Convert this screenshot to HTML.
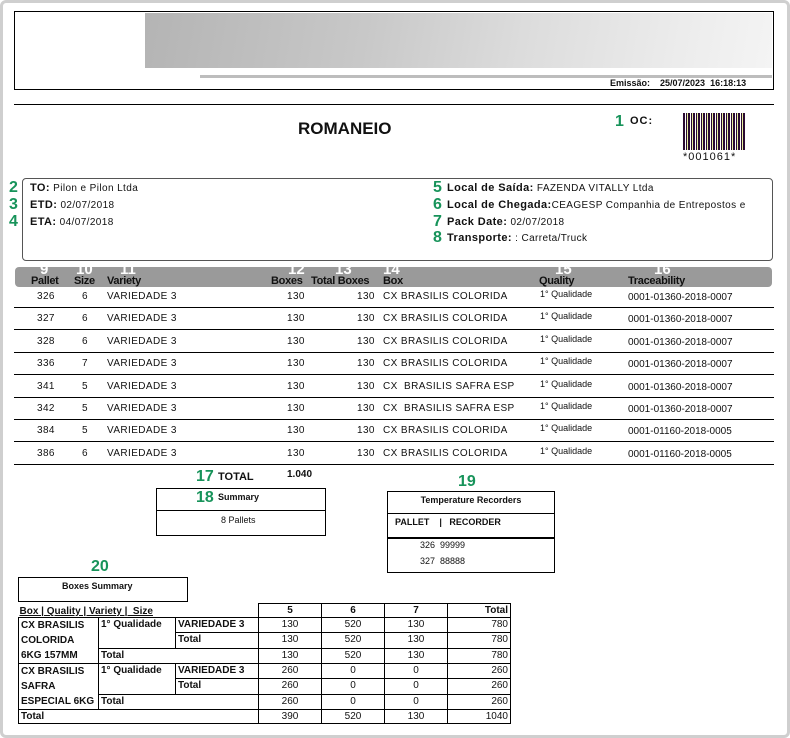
<!DOCTYPE html>
<html><head><meta charset="utf-8"><style>
*{margin:0;padding:0;box-sizing:border-box}
body{width:790px;height:738px;background:#fff;font-family:"Liberation Sans",Arial,sans-serif;color:#111;position:relative;overflow:hidden}
.frame{position:absolute;left:0;top:0;width:790px;height:738px;border:3px solid #cfcfcf;border-radius:6px}
.a{position:absolute;white-space:nowrap}
.g{color:#17935a;font-weight:bold;font-size:16px}
.s{font-size:10px;letter-spacing:.4px}
.b{font-weight:bold}
.hd{font-size:11px;font-weight:bold;color:#111;letter-spacing:-.3px}
.hn{font-size:15px;font-weight:bold;color:#fff}
table.bs{position:absolute;left:18px;top:603px;border-collapse:collapse;font-size:10px;font-weight:bold}
table.bs td{border:1px solid #000;height:14px;padding:0 2px;line-height:13px;vertical-align:top}
</style></head><body>
<div class="frame"></div>
<div class="a" style="left:14px;top:11px;width:760px;height:79px;border:1px solid #000"></div>
<div class="a" style="left:145px;top:13px;width:627px;height:55px;background:linear-gradient(100deg,#b4b4b4 0%,#c8c8c8 35%,#dcdcdc 60%,#ececec 85%,#f4f4f4 100%)"></div>
<div class="a" style="left:200px;top:75px;width:572px;height:3px;background:#bdbdbd"></div>
<div class="a" style="left:610px;top:78px;font-size:9px;font-weight:bold">Emissão:&nbsp;&nbsp;&nbsp; 25/07/2023&nbsp; 16:18:13</div>
<div class="a" style="left:14px;top:104px;width:760px;height:1px;background:#000"></div>
<div class="a" style="left:298px;top:119px;font-size:17px;font-weight:bold">ROMANEIO</div>
<div class="a g" style="left:615px;top:113px">1</div>
<div class="a" style="left:630px;top:115px;font-size:11px;font-weight:bold;letter-spacing:1px">OC:</div>
<div class="a" style="left:683px;top:113px;width:62px;height:37px;background:repeating-linear-gradient(90deg,#2a0a30 0 2px,#fff 2px 3px,#2a0a30 3px 4px,#e8f0a0 4px 5px)"></div>
<div class="a" style="left:683px;top:151px;font-size:11px;letter-spacing:1px">*001061*</div>

<div class="a" style="left:22px;top:178px;width:751px;height:83px;border:1px solid #555;border-radius:4px"></div>
<div class="a g" style="left:9px;top:179px">2</div><div class="a s" style="left:30px;top:182px"><b style="font-size:11px">TO:</b> Pilon e Pilon Ltda</div>
<div class="a g" style="left:9px;top:196px">3</div><div class="a s" style="left:30px;top:199px"><b style="font-size:11px">ETD:</b> 02/07/2018</div>
<div class="a g" style="left:9px;top:213px">4</div><div class="a s" style="left:30px;top:216px"><b style="font-size:11px">ETA:</b> 04/07/2018</div>
<div class="a g" style="left:433px;top:179px">5</div><div class="a s" style="left:447px;top:182px"><b style="font-size:11px">Local de Saída:</b> FAZENDA VITALLY Ltda</div>
<div class="a g" style="left:433px;top:196px">6</div><div class="a s" style="left:447px;top:199px"><b style="font-size:11px">Local de Chegada:</b>CEAGESP Companhia de Entrepostos e</div>
<div class="a g" style="left:433px;top:213px">7</div><div class="a s" style="left:447px;top:216px"><b style="font-size:11px">Pack Date:</b> 02/07/2018</div>
<div class="a g" style="left:433px;top:229px">8</div><div class="a s" style="left:447px;top:232px"><b style="font-size:11px">Transporte:</b> : Carreta/Truck</div>

<div class="a" style="left:15px;top:267px;width:757px;height:20px;background:#9a9a9a;border-radius:4px"></div>
<div class="a hn" style="left:40px;top:261px">9</div><div class="a hd" style="left:31px;top:275px">Pallet</div>
<div class="a hn" style="left:76px;top:261px">10</div><div class="a hd" style="left:74px;top:275px">Size</div>
<div class="a hn" style="left:120px;top:261px">11</div><div class="a hd" style="left:107px;top:275px">Variety</div>
<div class="a hn" style="left:288px;top:261px">12</div><div class="a hd" style="left:271px;top:275px">Boxes</div>
<div class="a hn" style="left:335px;top:261px">13</div><div class="a hd" style="left:311px;top:275px">Total Boxes</div>
<div class="a hn" style="left:383px;top:261px">14</div><div class="a hd" style="left:383px;top:275px">Box</div>
<div class="a hn" style="left:555px;top:261px">15</div><div class="a hd" style="left:539px;top:275px">Quality</div>
<div class="a hn" style="left:654px;top:261px">16</div><div class="a hd" style="left:628px;top:275px">Traceability</div>

<div id="rows"></div>
<script>
var d=[["326","6","CX BRASILIS COLORIDA","0001-01360-2018-0007"],["327","6","CX BRASILIS COLORIDA","0001-01360-2018-0007"],["328","6","CX BRASILIS COLORIDA","0001-01360-2018-0007"],["336","7","CX BRASILIS COLORIDA","0001-01360-2018-0007"],["341","5","CX&nbsp; BRASILIS SAFRA ESP","0001-01360-2018-0007"],["342","5","CX&nbsp; BRASILIS SAFRA ESP","0001-01360-2018-0007"],["384","5","CX BRASILIS COLORIDA","0001-01160-2018-0005"],["386","6","CX BRASILIS COLORIDA","0001-01160-2018-0005"]];
var h="";for(var i=0;i<8;i++){var y=291+i*22.4;var r=d[i];
h+='<div class="a s" style="left:37px;top:'+y+'px">'+r[0]+'</div><div class="a s" style="left:82px;top:'+y+'px">'+r[1]+'</div><div class="a s" style="left:107px;top:'+y+'px">VARIEDADE 3</div><div class="a s" style="left:287px;top:'+y+'px">130</div><div class="a s" style="left:357px;top:'+y+'px">130</div><div class="a s" style="left:383px;top:'+y+'px;width:143px;overflow:hidden">'+r[2]+'</div><div class="a" style="left:540px;top:'+(y-2)+'px;font-size:9px">1° Qualidade</div><div class="a" style="left:628px;top:'+(y+1)+'px;font-size:10px">'+r[3]+'</div><div class="a" style="left:14px;top:'+(y+16)+'px;width:760px;height:1px;background:#000"></div>';}
document.getElementById("rows").innerHTML=h;
</script>

<div class="a g" style="left:196px;top:468px">17</div>
<div class="a b" style="left:218px;top:471px;font-size:11px">TOTAL</div>
<div class="a b" style="left:287px;top:469px;font-size:10px">1.040</div>
<div class="a" style="left:156px;top:488px;width:170px;height:48px;border:1px solid #000"></div>
<div class="a" style="left:156px;top:510px;width:170px;height:1px;background:#000"></div>
<div class="a g" style="left:196px;top:489px">18</div>
<div class="a b" style="left:218px;top:492px;font-size:9px">Summary</div>
<div class="a" style="left:221px;top:515px;font-size:9px">8 Pallets</div>

<div class="a g" style="left:458px;top:473px">19</div>
<div class="a" style="left:387px;top:491px;width:168px;height:82px;border:1px solid #000"></div>
<div class="a b" style="left:387px;top:495px;width:168px;text-align:center;font-size:9px">Temperature Recorders</div>
<div class="a" style="left:387px;top:513px;width:168px;height:1px;background:#000"></div>
<div class="a b" style="left:395px;top:517px;font-size:9px">PALLET&nbsp;&nbsp;&nbsp; |&nbsp;&nbsp; RECORDER</div>
<div class="a" style="left:387px;top:537px;width:168px;height:2px;background:#000"></div>
<div class="a" style="left:420px;top:540px;font-size:9px">326&nbsp; 99999</div>
<div class="a" style="left:420px;top:556px;font-size:9px">327&nbsp; 88888</div>

<div class="a g" style="left:91px;top:558px">20</div>
<div class="a" style="left:18px;top:577px;width:170px;height:25px;border:1px solid #000"></div>
<div class="a b" style="left:62px;top:581px;font-size:9px">Boxes Summary</div>

<table class="bs">
<tr><td colspan="3" style="border:none;border-bottom:1px solid #000;width:240px;text-decoration:underline;vertical-align:bottom;line-height:11px;padding:0 1px">Box | Quality | Variety |&nbsp; Size</td><td style="width:63px;text-align:center">5</td><td style="width:63px;text-align:center">6</td><td style="width:63px;text-align:center">7</td><td style="width:63px;text-align:right">Total</td></tr>
<tr><td rowspan="3" style="width:80px;line-height:15px">CX BRASILIS COLORIDA 6KG 157MM</td><td rowspan="2" style="width:77px">1° Qualidade</td><td style="width:83px">VARIEDADE 3</td><td style="text-align:center;font-weight:normal">130</td><td style="text-align:center;font-weight:normal">520</td><td style="text-align:center;font-weight:normal">130</td><td style="text-align:right;font-weight:normal">780</td></tr>
<tr><td>Total</td><td style="text-align:center;font-weight:normal">130</td><td style="text-align:center;font-weight:normal">520</td><td style="text-align:center;font-weight:normal">130</td><td style="text-align:right;font-weight:normal">780</td></tr>
<tr><td colspan="2">Total</td><td style="text-align:center;font-weight:normal">130</td><td style="text-align:center;font-weight:normal">520</td><td style="text-align:center;font-weight:normal">130</td><td style="text-align:right;font-weight:normal">780</td></tr>
<tr><td rowspan="3" style="line-height:15px">CX BRASILIS SAFRA ESPECIAL 6KG</td><td rowspan="2">1° Qualidade</td><td>VARIEDADE 3</td><td style="text-align:center;font-weight:normal">260</td><td style="text-align:center;font-weight:normal">0</td><td style="text-align:center;font-weight:normal">0</td><td style="text-align:right;font-weight:normal">260</td></tr>
<tr><td>Total</td><td style="text-align:center;font-weight:normal">260</td><td style="text-align:center;font-weight:normal">0</td><td style="text-align:center;font-weight:normal">0</td><td style="text-align:right;font-weight:normal">260</td></tr>
<tr><td colspan="2">Total</td><td style="text-align:center;font-weight:normal">260</td><td style="text-align:center;font-weight:normal">0</td><td style="text-align:center;font-weight:normal">0</td><td style="text-align:right;font-weight:normal">260</td></tr>
<tr><td colspan="3">Total</td><td style="text-align:center;font-weight:normal">390</td><td style="text-align:center;font-weight:normal">520</td><td style="text-align:center;font-weight:normal">130</td><td style="text-align:right;font-weight:normal">1040</td></tr>
</table>
</body></html>
